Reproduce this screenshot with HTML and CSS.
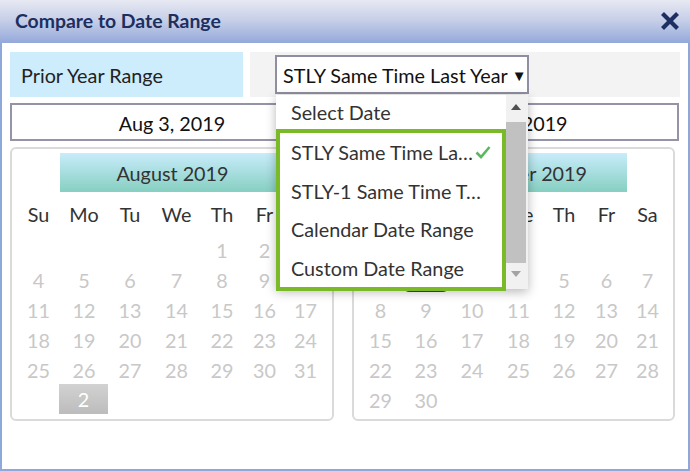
FILE: index.html
```html
<!DOCTYPE html>
<html>
<head>
<meta charset="utf-8">
<link rel="stylesheet" href="styles.css">
</head>
<body>
<div class="dialog">
  <div class="titlebar">
    <span class="title">Compare to Date Range</span>
    <svg class="close" width="20" height="20" viewBox="0 0 20 20"><path d="M2.5 2.5 L17.5 17.5 M17.5 2.5 L2.5 17.5" stroke="#1d2f62" stroke-width="4.2" fill="none"/></svg>
  </div>
  <div class="body">
    <div class="row-top">
      <div class="label">Prior Year Range</div>
      <div class="selwrap">
        <div class="select">
          <span>STLY Same Time Last Year</span><span class="caret">▼</span>
          <div class="dropdown">
            <div class="list">
              <div class="item first">Select Date</div>
              <div class="group">
                <div class="item">STLY Same Time La…<svg class="check" width="16" height="14" viewBox="0 0 16 14"><path d="M1.5 7.5 L6 12 L14.5 2" stroke="#5cb85c" stroke-width="2.6" fill="none"/></svg></div>
                <div class="item">STLY-1 Same Time T…</div>
                <div class="item">Calendar Date Range</div>
                <div class="item">Custom Date Range</div>
              </div>
            </div>
            <div class="scrollbar">
              <div class="arrow up"></div>
              <div class="thumb"></div>
              <div class="arrow down"></div>
            </div>
          </div>
        </div>
      </div>
    </div>
    <div class="row-inputs">
      <div class="input">Aug 3, 2019</div>
      <div class="input">Sep 2, 2019</div>
    </div>
    <div class="row-cals">
      <div class="cal">
        <div class="cal-head">August 2019</div>
        <div class="grid">
          <div class="dn">Su</div><div class="dn">Mo</div><div class="dn">Tu</div><div class="dn">We</div><div class="dn">Th</div><div class="dn">Fr</div><div class="dn"></div>
          <div></div><div></div><div></div><div></div><div class="d">1</div><div class="d">2</div><div class="d"></div>
          <div class="d">4</div><div class="d">5</div><div class="d">6</div><div class="d">7</div><div class="d">8</div><div class="d">9</div><div class="d"></div>
          <div class="d">11</div><div class="d">12</div><div class="d">13</div><div class="d">14</div><div class="d">15</div><div class="d">16</div><div class="d">17</div>
          <div class="d">18</div><div class="d">19</div><div class="d">20</div><div class="d">21</div><div class="d">22</div><div class="d">23</div><div class="d">24</div>
          <div class="d">25</div><div class="d">26</div><div class="d">27</div><div class="d">28</div><div class="d">29</div><div class="d">30</div><div class="d">31</div>
          <div></div><div class="d sel-grey">2</div><div></div><div></div><div></div><div></div><div></div>
        </div>
      </div>
      <div class="cal">
        <div class="cal-head">September 2019</div>
        <div class="grid">
          <div class="dn"></div><div class="dn"></div><div class="dn"></div><div class="dn">We</div><div class="dn">Th</div><div class="dn">Fr</div><div class="dn">Sa</div>
          <div></div><div></div><div></div><div></div><div></div><div></div><div></div>
          <div class="d"></div><div class="d sel-blue"></div><div class="d"></div><div class="d"></div><div class="d">5</div><div class="d">6</div><div class="d">7</div>
          <div class="d">8</div><div class="d">9</div><div class="d">10</div><div class="d">11</div><div class="d">12</div><div class="d">13</div><div class="d">14</div>
          <div class="d">15</div><div class="d">16</div><div class="d">17</div><div class="d">18</div><div class="d">19</div><div class="d">20</div><div class="d">21</div>
          <div class="d">22</div><div class="d">23</div><div class="d">24</div><div class="d">25</div><div class="d">26</div><div class="d">27</div><div class="d">28</div>
          <div class="d">29</div><div class="d">30</div><div></div><div></div><div></div><div></div><div></div>
        </div>
      </div>
    </div>
  </div>
</div>
</body>
</html>
```
FILE: styles.css
```css
* { box-sizing: border-box; }
html, body { margin: 0; padding: 0; background: #fff; }
body { font-family: Lato, "Open Sans", sans-serif; font-size: 19.8px; color: #333; }

.dialog { width: 690px; height: 471px; display: flex; flex-direction: column; }

.titlebar {
  height: 43px;
  flex: none;
  display: flex;
  align-items: center;
  justify-content: space-between;
  padding: 0 10px 2px 15px;
  background: linear-gradient(to bottom, #e7e9f3 0%, #c4cde7 50%, #93a8da 100%);
}
.title { font-weight: bold; font-size: 19.4px; color: #1d2f5f; }
.close { display: block; }

.body {
  flex: 1;
  border: 2px solid #8ea8dc;
  border-top: none;
  padding: 9px 8px 0 8px;
}

.row-top { display: flex; gap: 7px; height: 45px; }
.label {
  width: 233px;
  background: #cdedfd;
  color: #222;
  padding-left: 11px;
  display: flex;
  align-items: center;
}
.selwrap { flex: 1; background: #f3f3f3; padding: 3px 0 0 25px; }
.select {
  position: relative;
  width: 254px;
  height: 39px;
  border: 2px solid #8f8fa1;
  background: #fff;
  color: #111;
  display: flex;
  align-items: center;
  padding-left: 6px;
  white-space: nowrap;
}
.caret { font-size: 15px; margin-left: 4px; color: #111; }

.dropdown {
  position: absolute;
  left: -1px;
  top: 38px;
  width: 252px;
  height: 194px;
  background: #fff;
  display: flex;
  box-shadow: 0 3px 10px rgba(0,0,0,0.28);
  z-index: 5;
}
.list { flex: 1; }
.item {
  height: 38.5px;
  display: flex;
  align-items: center;
  padding-left: 11px;
  color: #333;
}
.item.first { height: 34px; padding-left: 15px; }
.group { border: 4px solid #7aba28; }
.check { margin-left: 2px; }
.scrollbar {
  width: 22px;
  background: #f1f1f1;
  display: flex;
  flex-direction: column;
  align-items: center;
  padding-right: 2px;
}
.arrow { width: 0; height: 0; border-left: 5px solid transparent; border-right: 5px solid transparent; }
.arrow.up { border-bottom: 6px solid #505050; margin: 9px 0 12px; }
.arrow.down { border-top: 6px solid #a3a3a3; margin: 8px 0 0; }
.thumb { width: 20px; height: 141px; background: #c1c1c1; }

.row-inputs { display: grid; grid-template-columns: 324px 327px; gap: 18px; margin-top: 6px; }
.input {
  height: 38px;
  border: 2px solid #9494a6;
  color: #111;
  display: flex;
  align-items: center;
  justify-content: center;
  padding-top: 1px;
}

.row-cals { display: grid; grid-template-columns: 324px 323px; gap: 18px; margin-top: 6px; }
.cal {
  border: 2px solid #dadada;
  border-radius: 6px;
  padding: 4px 0 4px 4px;
}
.cal-head {
  margin-left: 44px;
  width: 225px;
  height: 39px;
  background: linear-gradient(to bottom, #c9ecfb 0%, #86cfc1 100%);
  display: flex;
  align-items: center;
  justify-content: center;
  color: #333;
}
.grid {
  display: grid;
  grid-template-columns: 45px 46px 46px 47px 44px 41px 41px;
  grid-template-rows: 43px repeat(6, 30px);
}
.grid > div { display: flex; align-items: center; justify-content: center; }
.dn { color: #333; padding-top: 1px; }
.d { color: #c8c8c8; }
.sel-grey { background: linear-gradient(to bottom, #d2d2d2, #bcbcbc); color: #fff; margin: -1px -1px 1px -2px; }
.sel-blue { background: #0b46c0; color: #fff; border-radius: 6px; margin: 1px 0 3px 0; }
```
